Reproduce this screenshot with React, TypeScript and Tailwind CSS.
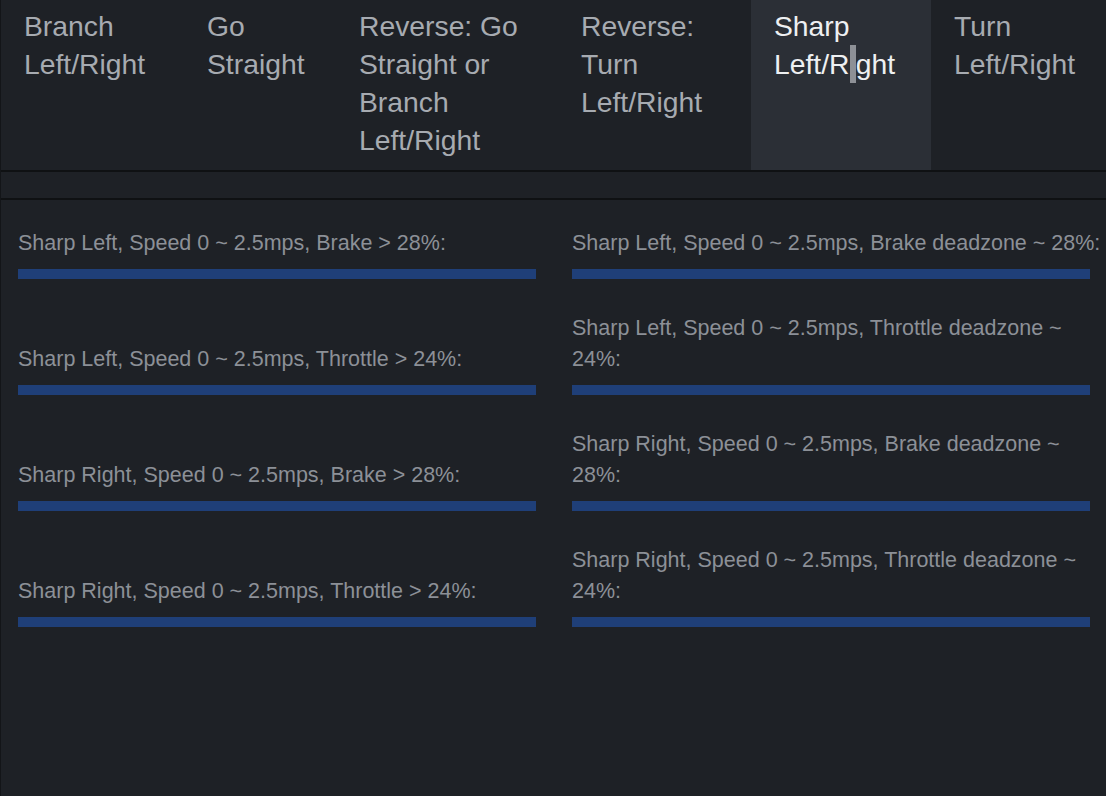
const tabs = [
  { lines: ['Branch', 'Left/Right'], w: 'w-[183px]' },
  { lines: ['Go', 'Straight'], w: 'w-[152px]' },
  { lines: ['Reverse: Go', 'Straight or', 'Branch', 'Left/Right'], w: 'w-[222px]' },
  { lines: ['Reverse:', 'Turn', 'Left/Right'], w: 'w-[193px]' },
  { lines: ['Sharp', 'Left/Right'], w: 'w-[180px]', active: true },
  { lines: ['Turn', 'Left/Right'], w: 'flex-1' },
];

const rows: string[][][] = [
  [['Sharp Left, Speed 0 ~ 2.5mps, Brake > 28%:'], ['Sharp Left, Speed 0 ~ 2.5mps, Brake deadzone ~ 28%:']],
  [['Sharp Left, Speed 0 ~ 2.5mps, Throttle > 24%:'], ['Sharp Left, Speed 0 ~ 2.5mps, Throttle deadzone ~', '24%:']],
  [['Sharp Right, Speed 0 ~ 2.5mps, Brake > 28%:'], ['Sharp Right, Speed 0 ~ 2.5mps, Brake deadzone ~', '28%:']],
  [['Sharp Right, Speed 0 ~ 2.5mps, Throttle > 24%:'], ['Sharp Right, Speed 0 ~ 2.5mps, Throttle deadzone ~', '24%:']],
];

function Setting({ lines }: { lines: string[] }) {
  return (
    <div className="flex flex-col">
      <div className="text-[21.5px] leading-[31px] text-[#8c9097] mb-[10px]">
        {lines.map((l, i) => (
          <div key={i} className="whitespace-nowrap">{l}</div>
        ))}
      </div>
      <div className="h-[10px] w-[518px] bg-[#1f3f78]" />
    </div>
  );
}

export default function App() {
  return (
    <div
      className="w-[1106px] h-[796px] overflow-hidden bg-[#1e2126] border-l border-[#131518] flex flex-col"
      style={{ fontFamily: '"Liberation Sans", Arial, sans-serif' }}
    >
      {/* tab strip */}
      <div className="flex h-[170px] shrink-0">
        {tabs.map((t, i) => (
          <div
            key={i}
            className={`${t.w} h-full pl-[23px] pt-[7px] text-[28.3px] leading-[38px] ${
              t.active ? 'bg-[#2b2f36] text-[#eef0f2]' : 'text-[#a7abb1]'
            }`}
          >
            {t.lines.map((l, j) =>
              t.active && l === 'Left/Right' ? (
                <div key={j} className="whitespace-nowrap">
                  Left/R
                  <span className="inline-block bg-[#8d9096] text-[#8d9096] leading-[38px]">i</span>
                  ght
                </div>
              ) : (
                <div key={j} className="whitespace-nowrap">{l}</div>
              )
            )}
          </div>
        ))}
      </div>
      <div className="h-[30px] shrink-0 border-y-2 border-[#0f1113]" />

      {/* settings */}
      <div className="pt-[28px] pl-[17px] grid grid-cols-[518px_518px] gap-x-[36px] gap-y-[34px] items-end">
        {rows.map((r, i) => (
          <div key={i} className="contents">
            <Setting lines={r[0]} />
            <Setting lines={r[1]} />
          </div>
        ))}
      </div>
    </div>
  );
}
